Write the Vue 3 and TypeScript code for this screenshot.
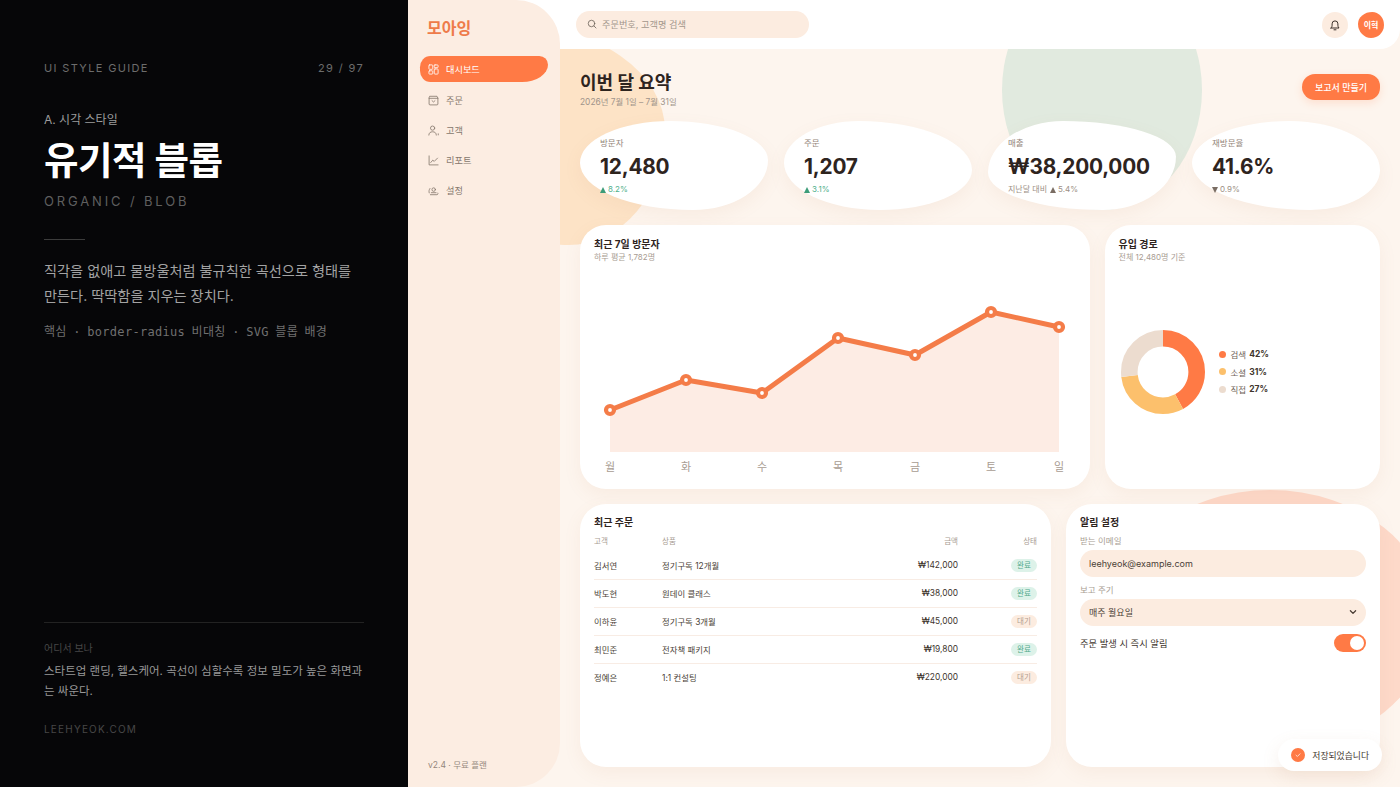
<script setup lang="ts">
const navItems = [
  { label: '대시보드', icon: 'grid', active: true },
  { label: '주문', icon: 'box', active: false },
  { label: '고객', icon: 'users', active: false },
  { label: '리포트', icon: 'chart', active: false },
  { label: '설정', icon: 'gear', active: false },
];

const stats = [
  { label: '방문자', value: '12,480', note: '', arrow: 'up', delta: '8.2%', tone: 'good' },
  { label: '주문', value: '1,207', note: '', arrow: 'up', delta: '3.1%', tone: 'good' },
  { label: '매출', value: '₩38,200,000', note: '지난달 대비', arrow: 'up', delta: '5.4%', tone: 'muted' },
  { label: '재방문율', value: '41.6%', note: '', arrow: 'down', delta: '0.9%', tone: 'muted' },
];

const points = [
  { x: 16, y: 146, day: '월' },
  { x: 92, y: 116, day: '화' },
  { x: 168, y: 129, day: '수' },
  { x: 244, y: 74, day: '목' },
  { x: 321, y: 91, day: '금' },
  { x: 397, y: 48, day: '토' },
  { x: 465, y: 63, day: '일' },
];
const linePoints = points.map((p) => `${p.x},${p.y}`).join(' ');
const areaPoints = `16,188 ${linePoints} 465,188`;

const donutRadius = 33.7;
const circumference = 2 * Math.PI * donutRadius;
const sources = [
  { label: '검색', pct: 42, color: '#ff7a45', offset: 0 },
  { label: '소셜', pct: 31, color: '#fcc06c', offset: 42 },
  { label: '직접', pct: 27, color: '#ecdccf', offset: 73 },
];

const orders = [
  { name: '김서연', product: '정기구독 12개월', price: '₩142,000', status: '완료' },
  { name: '박도현', product: '원데이 클래스', price: '₩38,000', status: '완료' },
  { name: '이하윤', product: '정기구독 3개월', price: '₩45,000', status: '대기' },
  { name: '최민준', product: '전자책 패키지', price: '₩19,800', status: '완료' },
  { name: '정예은', product: '1:1 컨설팅', price: '₩220,000', status: '대기' },
];
</script>

<template>
  <div class="screen">
    <aside class="guide">
      <div class="guide-head">
        <span>UI STYLE GUIDE</span>
        <span>29 / 97</span>
      </div>
      <p class="guide-cat">A. 시각 스타일</p>
      <h1 class="guide-title">유기적 블롭</h1>
      <p class="guide-en">ORGANIC / BLOB</p>
      <div class="guide-rule"></div>
      <p class="guide-desc">직각을 없애고 물방울처럼 불규칙한 곡선으로 형태를 만든다. 딱딱함을 지우는 장치다.</p>
      <p class="guide-key">핵심 · border-radius 비대칭 · SVG 블롭 배경</p>
      <div class="guide-foot">
        <p class="foot-label">어디서 보나</p>
        <p class="foot-text">스타트업 랜딩, 헬스케어. 곡선이 심할수록 정보 밀도가 높은 화면과는 싸운다.</p>
        <p class="foot-link">LEEHYEOK.COM</p>
      </div>
    </aside>

    <div class="app">
      <nav class="sidebar">
        <div class="logo">모아잉</div>
        <a v-for="item in navItems" :key="item.label" class="nav-item" :class="{ active: item.active }">
          <svg class="nav-icon" viewBox="0 0 12 12" fill="none" stroke="currentColor" stroke-width="0.9" stroke-linecap="round" stroke-linejoin="round">
            <template v-if="item.icon === 'grid'">
              <rect x="1" y="1" width="4.2" height="4.8" rx="0.8" />
              <rect x="6.8" y="1" width="4.2" height="3" rx="0.8" />
              <rect x="1" y="7.4" width="4.2" height="3.6" rx="0.8" />
              <rect x="6.8" y="5.4" width="4.2" height="5.6" rx="0.8" />
            </template>
            <template v-else-if="item.icon === 'box'">
              <path d="M2.2 1.4h7.6l1 2v6.4a1 1 0 0 1-1 1H2.2a1 1 0 0 1-1-1V3.4z" />
              <path d="M1.2 3.6h9.6M4.4 6.2 6 7.6l1.6-1.4" />
            </template>
            <template v-else-if="item.icon === 'users'">
              <circle cx="5" cy="3.4" r="2.3" />
              <path d="M.9 11c0-2.4 1.7-3.6 4.1-3.6S9.1 8.6 9.1 11" />
              <path d="M11.2 9.6v1.2" />
            </template>
            <template v-else-if="item.icon === 'chart'">
              <path d="M1.2 1v9.8H11" />
              <path d="M3 8.2 5.2 5.6l1.6 1.4L10.4 3.4" />
            </template>
            <template v-else>
              <circle cx="6.2" cy="5" r="1.9" />
              <path d="M2.6 10.6h7.2a1.2 1.2 0 0 0 1-1.8M1.3 8.6c-.5-1.7-.2-3.4.8-4.8M3.6 8.4h5.2" />
            </template>
          </svg>
          <span>{{ item.label }}</span>
        </a>
        <div class="plan">v2.4 · 무료 플랜</div>
      </nav>

      <div class="main">
        <header class="topbar">
          <div class="search">
            <svg class="search-icon" viewBox="0 0 12 12" fill="none" stroke="#6f655c" stroke-width="1" stroke-linecap="round">
              <circle cx="5.4" cy="5.4" r="3.9" />
              <path d="M8.4 8.4 10.8 10.8" />
            </svg>
            <span>주문번호, 고객명 검색</span>
          </div>
          <div class="top-actions">
            <div class="bell">
              <svg viewBox="0 0 12 12" fill="none" stroke="#3a2f28" stroke-width="1" stroke-linecap="round" stroke-linejoin="round">
                <path d="M2 9h8c-.8-.8-1.1-1.6-1.1-2.8V4.8a2.9 2.9 0 0 0-5.8 0v1.4C3.1 7.4 2.8 8.2 2 9z" />
                <path d="M5 10.8h2" />
              </svg>
            </div>
            <div class="avatar">이혁</div>
          </div>
        </header>

        <main class="content">
          <div class="blob blob-sand"></div>
          <div class="blob blob-sage"></div>
          <div class="blob blob-coral"></div>

          <div class="page-head">
            <div>
              <h2>이번 달 요약</h2>
              <p>2026년 7월 1일 – 7월 31일</p>
            </div>
            <button class="report-btn">보고서 만들기</button>
          </div>

          <section class="stats">
            <div v-for="s in stats" :key="s.label" class="stat">
              <div class="stat-label">{{ s.label }}</div>
              <div class="stat-value">{{ s.value }}</div>
              <div class="stat-delta" :class="s.tone">
                <span v-if="s.note" class="stat-note">{{ s.note }}</span>
                <i :class="['tri', s.arrow]"></i>
                <span>{{ s.delta }}</span>
              </div>
            </div>
          </section>

          <section class="row-charts">
            <div class="card chart-card">
              <h3>최근 7일 방문자</h3>
              <p class="card-sub">하루 평균 1,782명</p>
              <svg class="line-chart" viewBox="0 0 482 210">
                <polygon :points="areaPoints" fill="#fdece4" />
                <polyline :points="linePoints" fill="none" stroke="#f47c48" stroke-width="5" stroke-linejoin="round" />
                <g v-for="p in points" :key="p.x + p.day">
                  <circle :cx="p.x" :cy="p.y" r="4" fill="#fff" stroke="#f47c48" stroke-width="4.2" />
                  <text :x="p.x" y="207" text-anchor="middle" class="axis">{{ p.day }}</text>
                </g>
              </svg>
            </div>
            <div class="card source-card">
              <h3>유입 경로</h3>
              <p class="card-sub">전체 12,480명 기준</p>
              <div class="source-body">
                <svg class="donut" viewBox="0 0 84 84">
                  <circle
                    v-for="s in sources"
                    :key="s.label"
                    cx="42"
                    cy="42"
                    :r="donutRadius"
                    fill="none"
                    :stroke="s.color"
                    stroke-width="16.6"
                    :stroke-dasharray="`${(s.pct / 100) * circumference} ${circumference}`"
                    :stroke-dashoffset="-(s.offset / 100) * circumference"
                    transform="rotate(-90 42 42)"
                  />
                </svg>
                <ul class="legend">
                  <li v-for="s in sources" :key="s.label">
                    <i :style="{ background: s.color }"></i>
                    <span>{{ s.label }}</span>
                    <b>{{ s.pct }}%</b>
                  </li>
                </ul>
              </div>
            </div>
          </section>

          <section class="row-bottom">
            <div class="card orders-card">
              <h3>최근 주문</h3>
              <table>
                <thead>
                  <tr>
                    <th>고객</th>
                    <th>상품</th>
                    <th class="right">금액</th>
                    <th class="right">상태</th>
                  </tr>
                </thead>
                <tbody>
                  <tr v-for="o in orders" :key="o.name">
                    <td>{{ o.name }}</td>
                    <td>{{ o.product }}</td>
                    <td class="right price">{{ o.price }}</td>
                    <td class="right">
                      <span class="badge" :class="o.status === '완료' ? 'done' : 'wait'">{{ o.status }}</span>
                    </td>
                  </tr>
                </tbody>
              </table>
            </div>
            <div class="card form-card">
              <h3>알림 설정</h3>
              <label class="field-label first">받는 이메일</label>
              <div class="field">leehyeok@example.com</div>
              <label class="field-label">보고 주기</label>
              <div class="field select">
                <span>매주 월요일</span>
                <svg viewBox="0 0 10 10" fill="none" stroke="#4a3d34" stroke-width="1.3" stroke-linecap="round" stroke-linejoin="round">
                  <path d="M2.4 3.8 5 6.4l2.6-2.6" />
                </svg>
              </div>
              <div class="toggle-row">
                <span>주문 발생 시 즉시 알림</span>
                <div class="toggle"><i></i></div>
              </div>
            </div>
          </section>

          <div class="toast">
            <span class="toast-dot">
              <svg viewBox="0 0 14 14" fill="none" stroke="#ffd9c8" stroke-width="1" stroke-linecap="round" stroke-linejoin="round">
                <path d="M5 7.2 6.4 8.5 9 5.8" />
              </svg>
            </span>
            <span>저장되었습니다</span>
          </div>
        </main>
      </div>
    </div>
  </div>
</template>

<style scoped>
.screen {
  display: flex;
  width: 1400px;
  height: 787px;
  overflow: hidden;
  font-family: Inter, "Noto Sans CJK KR", sans-serif;
  color: #2e241e;
}

/* guide panel */
.guide {
  width: 408px;
  flex-shrink: 0;
  box-sizing: border-box;
  padding: 61px 44px 51px;
  background: #060608;
  display: flex;
  flex-direction: column;
  color: #a3a3a3;
}
.guide p,
.guide h1 {
  margin: 0;
}
.guide-head {
  display: flex;
  justify-content: space-between;
  font-size: 11px;
  line-height: 14px;
  letter-spacing: 1.35px;
  color: #6c6c6c;
}
.guide-cat {
  margin-top: 37px !important;
  font-size: 12px;
  line-height: 16px;
  color: #9c9c9c;
}
.guide-title {
  margin-top: 10px !important;
  font-size: 37.5px;
  line-height: 46px;
  font-weight: 700;
  letter-spacing: -0.5px;
  color: #fff;
}
.guide-en {
  margin-top: 8px !important;
  font-size: 13px;
  line-height: 18px;
  letter-spacing: 2.85px;
  color: #5f5f5f;
}
.guide-rule {
  width: 41px;
  height: 1px;
  margin-top: 29px;
  background: #3c3c3c;
}
.guide-desc {
  margin-top: 18px !important;
  font-size: 14.2px;
  line-height: 25px;
  color: #a3a3a3;
}
.guide-key {
  margin-top: 14px !important;
  font-family: "DejaVu Sans Mono", "Noto Sans CJK KR", monospace;
  font-size: 12px;
  line-height: 20px;
  letter-spacing: 0.3px;
  word-spacing: -1px;
  color: #707070;
}
.guide-foot {
  margin-top: auto;
  border-top: 1px solid #222;
  padding-top: 19px;
}
.foot-label {
  font-size: 10px;
  line-height: 13px;
  color: #474747;
}
.foot-text {
  margin-top: 7px !important;
  font-size: 11.5px;
  line-height: 19.5px;
  color: #989898;
}
.foot-link {
  margin-top: 21px !important;
  font-size: 10px;
  line-height: 14px;
  letter-spacing: 1.2px;
  color: #474747;
}

/* app shell */
.app {
  flex: 1;
  display: flex;
  min-width: 0;
  background: #fdf5ee;
}
.sidebar {
  position: relative;
  z-index: 3;
  width: 152px;
  flex-shrink: 0;
  box-sizing: border-box;
  padding: 17px 12px 16px;
  display: flex;
  flex-direction: column;
  gap: 4px;
  background: #fcede2;
  border-radius: 0 44px 44px 0;
}
.logo {
  padding-left: 7px;
  margin-bottom: 12px;
  font-size: 16px;
  line-height: 23px;
  font-weight: 700;
  color: #ee7b4a;
}
.nav-item {
  display: flex;
  align-items: center;
  gap: 7px;
  height: 26px;
  width: 128px;
  padding-left: 8px;
  box-sizing: border-box;
  font-size: 9.2px;
  color: #85786d;
}
.nav-item.active {
  margin-bottom: 1px;
  background: #ff7a45;
  color: #fff;
  border-radius: 12px 10px 30px 12px / 13px 10px 20px 13px;
}
.nav-icon {
  width: 11px;
  height: 11px;
  flex-shrink: 0;
}
.plan {
  margin-top: auto;
  padding-left: 8px;
  font-size: 8.5px;
  line-height: 12px;
  color: #93867b;
}

.main {
  position: relative;
  flex: 1;
  min-width: 0;
  display: flex;
  flex-direction: column;
}
.topbar {
  position: relative;
  z-index: 2;
  height: 49px;
  flex-shrink: 0;
  margin-left: -44px;
  padding: 0 16px 0 60px;
  display: flex;
  align-items: center;
  justify-content: space-between;
  background: #fff;
  border-bottom-right-radius: 20px;
}
.search {
  width: 233px;
  height: 27px;
  margin-top: -1px;
  padding-left: 11px;
  box-sizing: border-box;
  display: flex;
  align-items: center;
  gap: 5px;
  border-radius: 14px;
  background: #fcece0;
  font-size: 9.2px;
  color: #a2968b;
}
.search-icon {
  width: 10px;
  height: 10px;
}
.top-actions {
  display: flex;
  align-items: center;
  gap: 10px;
}
.bell {
  width: 26px;
  height: 26px;
  border-radius: 50%;
  background: #fcece0;
  display: flex;
  align-items: center;
  justify-content: center;
}
.bell svg {
  width: 12px;
  height: 12px;
}
.avatar {
  width: 26px;
  height: 26px;
  display: flex;
  align-items: center;
  justify-content: center;
  background: #ff7a45;
  color: #fff;
  font-size: 8px;
  font-weight: 700;
  border-radius: 55% 45% 50% 50% / 45% 50% 50% 55%;
}

/* content */
.content {
  position: relative;
  flex: 1;
  min-height: 0;
  box-sizing: border-box;
  padding: 20px;
  display: flex;
  flex-direction: column;
  overflow: hidden;
}
.blob {
  position: absolute;
}
.blob-sand {
  left: -100px;
  top: -24px;
  width: 205px;
  height: 220px;
  background: #fde3c6;
  border-radius: 26% 74% 47% 53% / 48% 48% 52% 52%;
}
.blob-sage {
  left: 442px;
  top: -79px;
  width: 200px;
  height: 240px;
  background: #e1eadf;
  border-radius: 50%;
}
.blob-coral {
  left: 548px;
  top: 441px;
  width: 324px;
  height: 260px;
  background: #fdd9c9;
  border-radius: 50%;
}
.page-head,
.stats,
.row-charts,
.row-bottom {
  position: relative;
  z-index: 1;
}
.page-head {
  display: flex;
  justify-content: space-between;
  align-items: flex-start;
  height: 52px;
}
.page-head h2 {
  margin: 2px 0 0;
  font-size: 18px;
  line-height: 24px;
  font-weight: 700;
  color: #2e241e;
}
.page-head p {
  margin: 1px 0 0;
  font-size: 8.4px;
  line-height: 12px;
  color: #a0948a;
}
.report-btn {
  width: 78px;
  height: 26px;
  margin-top: 5px;
  padding: 0;
  border: 0;
  background: #ff7a45;
  color: #fff;
  font-family: inherit;
  font-size: 9px;
  font-weight: 500;
  border-radius: 14px 13px 13px 14px;
  box-shadow: 0 3px 8px rgba(255, 122, 69, 0.18);
}
.stats {
  display: grid;
  grid-template-columns: repeat(4, 1fr);
  gap: 16px;
  height: 89px;
}
.stat {
  box-sizing: border-box;
  padding: 16px 0 0 20px;
  background: #fff;
  box-shadow: 0 6px 18px rgba(190, 130, 90, 0.08);
  border-radius: 48% 52% 40% 60% / 47% 44% 56% 53%;
}
.stat:nth-child(2) {
  border-radius: 40% 60% 49% 51% / 47% 55% 45% 53%;
}
.stat:nth-child(3) {
  border-radius: 40% 60% 39% 61% / 58% 40% 60% 42%;
}
.stat:nth-child(4) {
  border-radius: 52% 48% 37% 63% / 47% 55% 45% 53%;
}
.stat-label {
  font-size: 8.5px;
  line-height: 12px;
  color: #93867b;
}
.stat-value {
  margin-top: 4px;
  font-size: 20.8px;
  line-height: 28px;
  font-weight: 700;
  letter-spacing: -0.2px;
  color: #2e241e;
}
.stat-delta {
  margin-top: 3px;
  display: flex;
  align-items: center;
  gap: 2px;
  font-size: 8px;
  line-height: 11px;
  color: #9c8f85;
}
.stat-delta.good {
  color: #4fb08c;
}
.stat-note {
  margin-right: 1px;
}
.tri {
  width: 0;
  height: 0;
  border-left: 3.5px solid transparent;
  border-right: 3.5px solid transparent;
}
.tri.up {
  border-bottom: 6px solid currentColor;
}
.tri.down {
  border-top: 6px solid currentColor;
}
.stat-delta.good .tri {
  color: #3d9c78;
}
.stat-delta.muted .tri {
  color: #7a6d63;
}

.row-charts {
  margin-top: 15px;
  flex: 1 1 0;
  min-height: 0;
  display: grid;
  grid-template-columns: 1.85fr 1fr;
  gap: 15px;
}
.row-bottom {
  margin-top: 15px;
  flex: 1 1 0;
  min-height: 0;
  display: grid;
  grid-template-columns: 1.5fr 1fr;
  gap: 15px;
}
.card {
  min-width: 0;
  box-sizing: border-box;
  padding: 12px 14px;
  background: #fff;
  border-radius: 26px;
  box-shadow: 0 6px 18px rgba(190, 130, 90, 0.08);
}
.card h3 {
  margin: 0;
  font-size: 10px;
  line-height: 14px;
  font-weight: 700;
  color: #2e241e;
}
.card-sub {
  margin: 1px 0 0;
  font-size: 8px;
  line-height: 11px;
  color: #a89c92;
}
.chart-card {
  display: flex;
  flex-direction: column;
}
.line-chart {
  display: block;
  width: 482px;
  height: 210px;
  margin-top: 1px;
  overflow: visible;
}
.axis {
  font-size: 11px;
  fill: #a89c92;
}
.source-card {
  display: flex;
  flex-direction: column;
}
.source-body {
  flex: 1;
  display: flex;
  align-items: center;
  gap: 14px;
  padding: 4px 0 0 2px;
}
.donut {
  width: 84px;
  height: 84px;
  flex-shrink: 0;
}
.legend {
  margin: 0;
  padding: 0;
  list-style: none;
  display: flex;
  flex-direction: column;
  gap: 5px;
}
.legend li {
  display: flex;
  align-items: center;
  gap: 3px;
  height: 12.5px;
  font-size: 8.5px;
  color: #6f6358;
}
.legend i {
  width: 7px;
  height: 7px;
  border-radius: 50%;
  margin-right: 2px;
}
.legend b {
  color: #40352d;
  font-weight: 700;
}
.orders-card h3,
.form-card h3 {
  margin-top: -1px;
}
.orders-card table {
  width: 100%;
  margin-top: 5px;
  border-collapse: collapse;
  font-size: 8.4px;
  color: #4b3f37;
}
th {
  height: 18px;
  padding: 0;
  font-size: 7.5px;
  line-height: 16px;
  font-weight: 400;
  text-align: left;
  vertical-align: top;
  color: #a89c92;
}
th:first-child {
  width: 68px;
}
td {
  height: 27px;
  padding: 0;
  border-bottom: 1px solid #f8ece4;
}
tr:last-child td {
  border-bottom: 0;
}
.right {
  text-align: right;
}
th.right:last-child,
td.right:last-child {
  width: 79px;
}
.price {
  color: #40352d;
}
.badge {
  display: inline-block;
  width: 26px;
  height: 13px;
  border-radius: 7px;
  font-size: 7.5px;
  line-height: 13px;
  text-align: center;
}
.badge.done {
  background: #ddf2e9;
  color: #4fa98a;
}
.badge.wait {
  background: #fcece0;
  color: #b39f90;
}
.form-card h3 {
  margin-bottom: 7px;
}
.field-label {
  display: block;
  margin-top: 8px;
  margin-bottom: 3px;
  font-size: 8.5px;
  line-height: 11px;
  color: #a89c92;
}
.field-label.first {
  margin-top: 0;
}
.field {
  height: 27px;
  padding: 0 9px;
  box-sizing: border-box;
  display: flex;
  align-items: center;
  border-radius: 14px;
  background: #fcece0;
  font-size: 9px;
  color: #4b3f37;
}
.field.select {
  justify-content: space-between;
}
.field.select svg {
  width: 10px;
  height: 10px;
  margin-right: -1px;
}
.toggle-row {
  margin-top: 8px;
  display: flex;
  justify-content: space-between;
  align-items: center;
  font-size: 9.3px;
  color: #40352d;
}
.toggle {
  width: 32px;
  height: 18px;
  box-sizing: border-box;
  padding: 2px;
  display: flex;
  justify-content: flex-end;
  background: #ff7a45;
  border-radius: 9px;
}
.toggle i {
  width: 14px;
  height: 14px;
  background: #fff;
  border-radius: 50%;
}
.toast {
  position: absolute;
  right: 18px;
  bottom: 16px;
  z-index: 4;
  height: 32px;
  padding: 0 13px;
  display: flex;
  align-items: center;
  gap: 7px;
  background: #fff;
  border-radius: 18px;
  box-shadow: 0 6px 18px rgba(190, 130, 90, 0.12);
  font-size: 8.8px;
  color: #40352d;
}
.toast-dot {
  width: 14px;
  height: 14px;
  border-radius: 50%;
  background: #ff7a45;
  display: flex;
}
</style>
